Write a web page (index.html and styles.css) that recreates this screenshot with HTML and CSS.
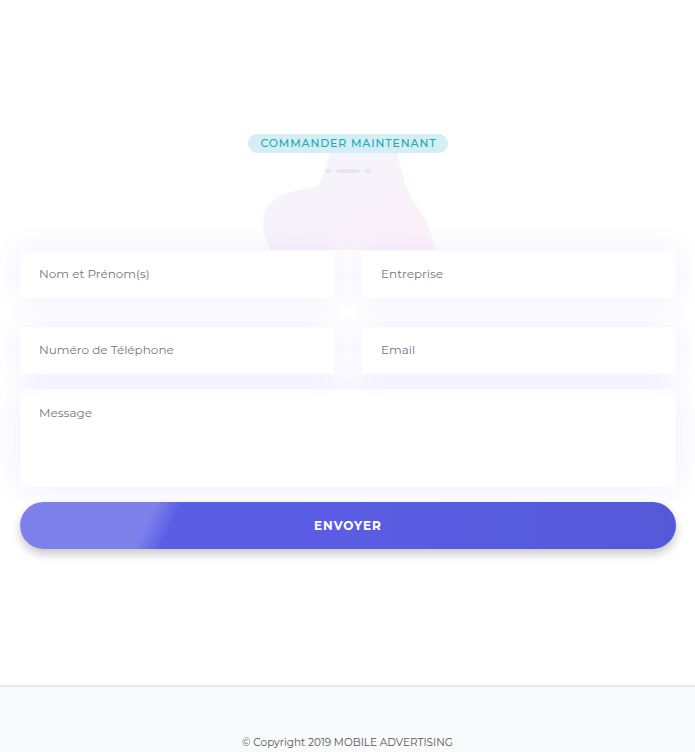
FILE: index.html
```html
<!DOCTYPE html>
<html lang="fr">
<head>
<meta charset="utf-8">
<title>Commander maintenant</title>
<link rel="stylesheet" href="styles.css">
</head>
<body>
<main class="order">
  <div class="order-head">
    <svg class="blob" width="180" height="104" viewBox="0 0 180 104">
      <defs>
        <linearGradient id="bg" x1="0" y1="0" x2="1" y2="1">
          <stop offset="0" stop-color="#f3f4fd"/>
          <stop offset="1" stop-color="#fcf1f8"/>
        </linearGradient>
      </defs>
      <path d="M72 4 C90 -2 124 -2 136 4 C142 26 146 46 158 62 C170 78 176 96 172 112 L20 112 C6 104 2 88 4 70 C6 52 30 44 52 42 C66 40 64 14 72 4 Z" fill="url(#bg)"/>
    </svg>
    <span class="badge">COMMANDER MAINTENANT</span>
    <div class="dashes"><i class="dot"></i><i class="bar"></i><i class="dot"></i></div>
  </div>
  <form class="form">
    <div class="row">
      <div class="field">Nom et Prénom(s)</div>
      <div class="field">Entreprise</div>
    </div>
    <div class="row">
      <div class="field">Numéro de Téléphone</div>
      <div class="field">Email</div>
    </div>
    <div class="field message">Message</div>
    <button type="button" class="send">ENVOYER</button>
  </form>
</main>
<footer class="footer">
  <p>© Copyright 2019 MOBILE ADVERTISING</p>
</footer>
</body>
</html>
```
FILE: styles.css
```css
* { box-sizing: border-box; }
html, body { margin: 0; padding: 0; }
body {
  background: #fff;
  font-family: "Montserrat", "Noto Sans", "Open Sans", sans-serif;
  color: #777;
  width: 695px;
}
.order {
  padding: 134px 19px 0 20px;
  height: 685px;
}
.order-head {
  position: relative;
  display: flex;
  flex-direction: column;
  align-items: center;
  height: 117px;
}
.blob {
  position: absolute;
  left: 240px;
  top: 12px;
  z-index: 0;
}
.badge {
  position: relative;
  z-index: 1;
  display: inline-block;
  height: 19px;
  line-height: 19px;
  padding: 0 11px 0 12px;
  border-radius: 10px;
  background: #d3eff3;
  color: #23a7b6;
  font-size: 11px;
  letter-spacing: 0.85px;
  font-weight: 500;
}
.dashes {
  position: relative;
  z-index: 1;
  display: flex;
  gap: 5px;
  margin-top: 16px;
}
.dashes i { display: block; height: 4px; border-radius: 2px; background: #e6e6ee; }
.dashes .dot { width: 6px; }
.dashes .bar { width: 24px; }
.form {
  position: relative;
  z-index: 1;
}
.row {
  display: flex;
  gap: 28px;
  margin-bottom: 29px;
}
.row + .row { margin-bottom: 15px; }
.field {
  flex: 1;
  height: 47px;
  background: #fff;
  padding: 15px 19px;
  font-size: 12px;
  color: #76767e;
  box-shadow: 0 0 30px rgba(108, 92, 255, 0.11);
}
.message {
  height: 98px;
  padding-top: 16px;
}
.send {
  display: block;
  width: 100%;
  height: 47px;
  margin-top: 15px;
  border: 0;
  border-radius: 24px;
  background:
    linear-gradient(115deg, rgba(255,255,255,0.22) 0, rgba(255,255,255,0.22) 20%, rgba(255,255,255,0) 24%),
    linear-gradient(90deg, #5b5ee5 0, #5b5ee5 40%, #5559d8 100%);
  color: #fff;
  font-family: inherit;
  font-weight: 700;
  font-size: 12px;
  letter-spacing: 1px;
  box-shadow: 0 5px 10px rgba(0, 0, 0, 0.22);
}
.footer {
  height: 67px;
  border-top: 2px solid #e8e8ec;
  background: #f9fafc;
  text-align: center;
}
.footer p {
  margin: 0;
  padding-top: 49px;
  font-size: 10.5px;
  color: #555;
}
```
